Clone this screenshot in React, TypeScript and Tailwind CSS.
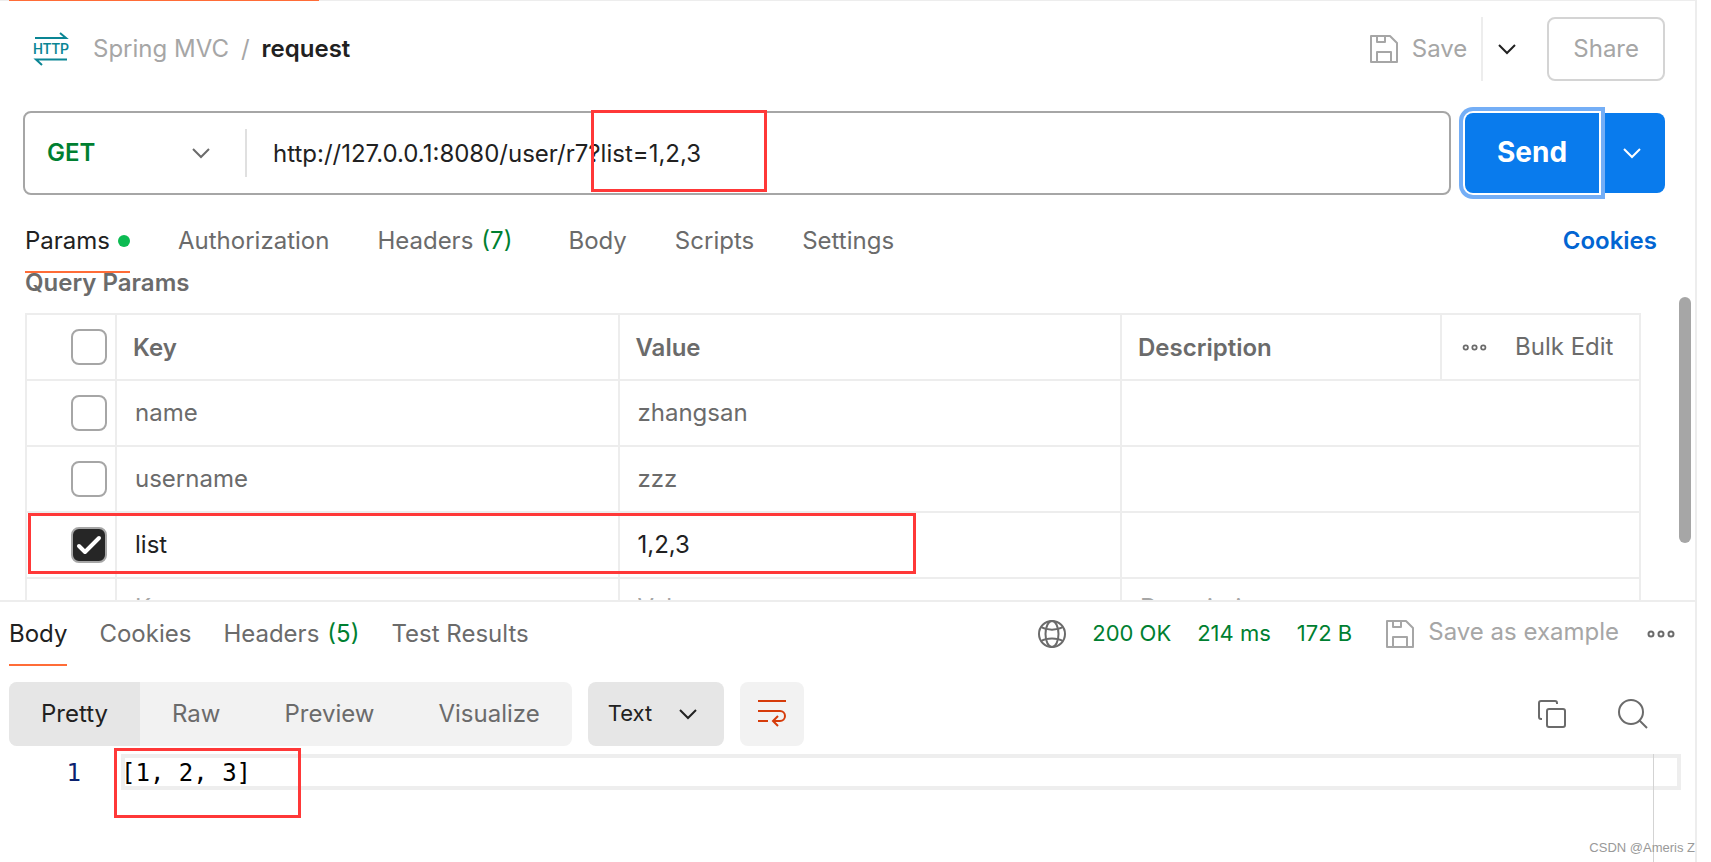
import { useState } from 'react';
import clsx from 'clsx';

const initialRows = [
  { key: 'name', value: 'zhangsan', enabled: false },
  { key: 'username', value: 'zzz', enabled: false },
  { key: 'list', value: '1,2,3', enabled: true },
];

const requestTabs = [
  { label: 'Params', dot: true },
  { label: 'Authorization' },
  { label: 'Headers', count: 7, className: 'pr-2' },
  { label: 'Body' },
  { label: 'Scripts' },
  { label: 'Settings' },
];

const responseTabs = [
  { label: 'Body' },
  { label: 'Cookies' },
  { label: 'Headers', count: 5 },
  { label: 'Test Results' },
];

const viewModes = ['Pretty', 'Raw', 'Preview', 'Visualize'];

function Chevron({ className }: { className?: string }) {
  return (
    <svg className={clsx('h-3 w-5', className)} viewBox="0 0 20 12" fill="none" stroke="currentColor" strokeWidth="2">
      <path d="M2 2l8 8 8-8" />
    </svg>
  );
}

function HttpIcon() {
  return (
    <svg className="h-8 w-8 overflow-visible text-[#0a8594]" viewBox="0 0 32 32" fill="none" stroke="currentColor" strokeWidth="2">
      <path d="M0 5h31L25 0M32 26.500H1L7 32" />
      <text
        x="16"
        y="21"
        textAnchor="middle"
        fill="currentColor"
        stroke="none"
        className="font-['Roboto',sans-serif] text-[14px] font-medium"
      >
        HTTP
      </text>
    </svg>
  );
}

function SaveIcon() {
  return (
    <svg className="h-7 w-7" viewBox="0 0 28 28" fill="none" stroke="currentColor" strokeWidth="2" strokeLinejoin="round">
      <path d="M1 1h19l7 7v19H1zM7 1v6h8V1M7 27V17h14v10" />
    </svg>
  );
}

function GlobeIcon() {
  return (
    <svg className="h-7 w-7 text-[#6b6b6b]" viewBox="0 0 28 28" fill="none" stroke="currentColor" strokeWidth="2">
      <circle cx="14" cy="14" r="13" />
      <ellipse cx="14" cy="14" rx="6.500" ry="13" />
      <path d="M3 7c6 3.500 16 3.500 22 0M3 21c6-3.500 16-3.500 22 0" />
    </svg>
  );
}

function WrapIcon() {
  return (
    <svg className="h-7 w-7 text-[#d63c0b]" viewBox="0 0 28 28" fill="none" stroke="currentColor" strokeWidth="2">
      <path d="M0 1h28M0 11h22a5 5 0 0 1 0 10h-7M0 21h10M20 16l-5 5 5 5" />
    </svg>
  );
}

function CopyIcon() {
  return (
    <svg className="h-7 w-7" viewBox="0 0 28 28" fill="none" stroke="currentColor" strokeWidth="2">
      <path d="M4 19H3a2 2 0 0 1-2-2V3a2 2 0 0 1 2-2h14a2 2 0 0 1 2 2v1" />
      <rect x="9" y="9" width="18" height="18" rx="2" />
    </svg>
  );
}

function SearchIcon() {
  return (
    <svg className="h-[30px] w-[30px]" viewBox="0 0 30 30" fill="none" stroke="currentColor" strokeWidth="2">
      <circle cx="13" cy="13" r="12" />
      <path d="M21.500 21.500l7.500 7.500" />
    </svg>
  );
}

function Dots({ className }: { className?: string }) {
  return (
    <svg className={className} viewBox="0 0 28 8" fill="none" stroke="currentColor" strokeWidth="2">
      <circle cx="4" cy="4" r="2.500" />
      <circle cx="14" cy="4" r="2.500" />
      <circle cx="24" cy="4" r="2.500" />
    </svg>
  );
}

function Checkbox({ label, checked, onChange }: { label: string; checked: boolean; onChange: () => void }) {
  return (
    <label className="relative ml-11 block h-9 w-9">
      <input
        type="checkbox"
        aria-label={label}
        checked={checked}
        onChange={onChange}
        className="peer block h-9 w-9 appearance-none rounded-lg border-2 border-[#a6a6a6] bg-white checked:bg-[#262626]"
      />
      <svg
        className="pointer-events-none absolute inset-0 hidden h-9 w-9 text-white peer-checked:block"
        viewBox="0 0 36 36"
        fill="none"
        stroke="currentColor"
        strokeWidth="4"
        strokeLinecap="round"
        strokeLinejoin="round"
      >
        <path d="M8 19l6 6 14-14" />
      </svg>
    </label>
  );
}

function Tab({ label, count, dot, active, className, onClick }: {
  label: string;
  count?: number;
  dot?: boolean;
  active: boolean;
  className?: string;
  onClick: () => void;
}) {
  return (
    <button
      onClick={onClick}
      className={clsx(
        'flex h-16 items-center gap-2 border-b-2 pt-0.5 whitespace-nowrap',
        active ? 'border-[#ff6c37] text-[#212121]' : 'border-transparent text-[#6b6b6b]',
        className
      )}
    >
      {label}
      {count && <span className="text-[#007f31]">({count})</span>}
      {dot && <span className="h-3 w-3 rounded-full bg-[#0cbb52]" />}
    </button>
  );
}

export default function App() {
  const [requestTab, setRequestTab] = useState('Params');
  const [responseTab, setResponseTab] = useState('Body');
  const [mode, setMode] = useState('Pretty');
  const [url, setUrl] = useState('http://127.0.0.1:8080/user/r7?list=1,2,3');
  const [rows, setRows] = useState(initialRows);

  const toggleRow = (index: number) =>
    setRows(rows.map((row, i) => (i === index ? { ...row, enabled: !row.enabled } : row)));

  return (
    <div className="relative min-h-screen bg-white pr-[14px] font-['Inter','Liberation_Sans',sans-serif] text-2xl text-[#6b6b6b] [font-optical-sizing:none]">
      <main className="flex min-h-screen flex-col border-r-2 border-[#ededed]">
        <div className="h-px bg-[#ededed] pl-[9px]">
          <div className="h-px w-[310px] bg-[#ff6c37]" />
        </div>

        <header className="flex h-20 items-center pt-4 pr-[30px] pl-[35px]">
          <HttpIcon />
          <nav className="ml-[26px] flex gap-3 text-[#a6a6a6]">
            <a href="#spring-mvc">Spring MVC</a>
            <span>/</span>
            <h1 className="font-semibold text-[#212121]">request</h1>
          </nav>
          <div className="ml-auto flex h-16 items-center">
            <button className="flex items-center gap-[14px] pr-[14px] text-[#a6a6a6]">
              <SaveIcon />
              Save
            </button>
            <button aria-label="Save options" className="flex h-16 items-center border-l-2 border-[#ededed] px-[14px] text-[#212121]">
              <Chevron />
            </button>
            <button className="ml-4 h-16 rounded-lg border-2 border-[#d4d4d4] px-6 text-[#a6a6a6]">Share</button>
          </div>
        </header>

        <div className="mt-[30px] flex items-center pr-[30px] pl-[23px]">
          <div className="relative flex h-[84px] flex-1 items-center rounded-lg border-2 border-[#a6a6a6]">
            <div className="relative">
              <select aria-label="Method" className="h-12 w-[220px] appearance-none pl-[22px] font-semibold text-[#007f31]">
                <option>GET</option>
                <option>POST</option>
              </select>
              <Chevron className="pointer-events-none absolute top-[18px] right-[34px]" />
            </div>
            <input
              aria-label="Request URL"
              value={url}
              onChange={(e) => setUrl(e.target.value)}
              className="h-12 flex-1 border-l-2 border-[#e0e0e0] pl-[26px] text-[#212121] outline-none"
            />
            <div className="pointer-events-none absolute -top-[3px] left-[566px] h-[82px] w-44 border-3 border-[#ff3838]" />
          </div>
          <button className="z-10 ml-[14px] h-20 w-[134px] rounded-l-lg bg-[#097bed] text-[28px] font-bold text-white shadow-[0_0_0_2px_#ffffff,0_0_0_6px_#74aef6]">
            Send
          </button>
          <button aria-label="Send options" className="flex h-20 w-[66px] items-center justify-center rounded-r-lg bg-[#097bed] text-white">
            <Chevron />
          </button>
        </div>

        <div className="mt-[14px] flex items-center pr-[38px] pl-[25px]">
          <div className="flex gap-12">
            {requestTabs.map((tab) => (
              <Tab key={tab.label} {...tab} active={requestTab === tab.label} onClick={() => setRequestTab(tab.label)} />
            ))}
          </div>
          <a href="#cookies" className="ml-auto font-semibold text-[#0265d2]">Cookies</a>
        </div>

        <section className="relative flex h-[327px] overflow-hidden pr-1 pl-[25px]">
          <div className="flex-1">
            <h2 className="-mt-1 leading-7 font-semibold">Query Params</h2>
            <table className="mt-4 w-full table-fixed border-collapse text-left [&_td]:border-2 [&_td]:border-[#ededed] [&_th]:border-2 [&_th]:border-[#ededed]">
              <colgroup>
                <col className="w-[90px]" />
                <col />
                <col />
                <col className="w-[320px]" />
                <col className="w-[199px]" />
              </colgroup>
              <thead>
                <tr className="h-[66px]">
                  <th>
                    <Checkbox
                      label="Select all"
                      checked={rows.every((row) => row.enabled)}
                      onChange={() => setRows(rows.map((row) => ({ ...row, enabled: true })))}
                    />
                  </th>
                  <th className="pt-0.5 pl-4 font-semibold">Key</th>
                  <th className="pt-0.5 pl-4 font-semibold">Value</th>
                  <th className="pt-0.5 pl-4 font-semibold">Description</th>
                  <th className="font-normal">
                    <div className="flex items-center gap-7 pl-5">
                      <button aria-label="Column options">
                        <Dots className="h-[7px] w-[25px]" />
                      </button>
                      <button>Bulk Edit</button>
                    </div>
                  </th>
                </tr>
              </thead>
              <tbody>
                {rows.map((row, i) => (
                  <tr key={row.key} className={clsx('h-[66px]', row.enabled && 'text-[#212121]')}>
                    <td>
                      <Checkbox label={`Enable ${row.key}`} checked={row.enabled} onChange={() => toggleRow(i)} />
                    </td>
                    <td>
                      <input aria-label="Key" defaultValue={row.key} className="block w-full pl-[18px]" />
                    </td>
                    <td>
                      <input aria-label="Value" defaultValue={row.value} className="block w-full pl-[18px]" />
                    </td>
                    <td colSpan={2}>
                      <input aria-label="Description" className="block w-full pl-[18px]" />
                    </td>
                  </tr>
                ))}
                <tr className="h-[60px]">
                  <td />
                  <td>
                    <input aria-label="New key" placeholder="Key" className="block w-full pl-[18px] placeholder:text-[#a6a6a6]" />
                  </td>
                  <td>
                    <input aria-label="New value" placeholder="Value" className="block w-full pl-[18px] placeholder:text-[#a6a6a6]" />
                  </td>
                  <td colSpan={2}>
                    <input aria-label="New description" placeholder="Description" className="block w-full pl-[18px] placeholder:text-[#a6a6a6]" />
                  </td>
                </tr>
              </tbody>
            </table>
          </div>
          <div className="mt-6 ml-[38px] h-[246px] w-3 rounded-full bg-[#a6a6a6]" />
          <div className="pointer-events-none absolute top-[240px] left-7 h-[61px] w-[888px] border-3 border-[#ff3838]" />
        </section>

        <section className="flex flex-1 flex-col border-t-2 border-[#ededed] pl-[9px]">
          <div className="flex items-center pr-5">
            <div className="flex gap-8">
              {responseTabs.map((tab) => (
                <Tab key={tab.label} {...tab} active={responseTab === tab.label} onClick={() => setResponseTab(tab.label)} />
              ))}
            </div>
            <div className="ml-auto flex items-center gap-[26px] text-[22px] text-[#007f31]">
              <GlobeIcon />
              <span>200 OK</span>
              <span>214 ms</span>
              <span>172 B</span>
            </div>
            <button className="ml-[34px] flex items-center gap-[14px] text-[#a6a6a6]">
              <SaveIcon />
              <span className="pb-1">Save as example</span>
            </button>
            <button aria-label="More actions" className="ml-7">
              <Dots className="h-2 w-7" />
            </button>
          </div>

          <div className="mt-4 flex h-16 items-center gap-4 pr-[47px]">
            <div className="flex h-16 overflow-hidden rounded-lg bg-[#f2f2f2]">
              {viewModes.map((name) => (
                <button
                  key={name}
                  onClick={() => setMode(name)}
                  className={clsx('px-8', mode === name && 'bg-[#e6e6e6] text-[#212121]')}
                >
                  {name}
                </button>
              ))}
            </div>
            <div className="relative text-[#212121]">
              <select aria-label="Response format" className="h-16 w-[136px] appearance-none rounded-lg bg-[#e6e6e6] pl-5 text-[22px]">
                <option>Text</option>
                <option>JSON</option>
              </select>
              <Chevron className="pointer-events-none absolute top-[26px] right-[26px]" />
            </div>
            <button aria-label="Wrap lines" className="flex h-16 w-16 items-center justify-center rounded-lg bg-[#f2f2f2]">
              <WrapIcon />
            </button>
            <button aria-label="Copy response" className="ml-auto">
              <CopyIcon />
            </button>
            <button aria-label="Search response" className="ml-9">
              <SearchIcon />
            </button>
          </div>

          <div className="relative mt-2 flex-1 pr-[14px] font-['DejaVu_Sans_Mono','Liberation_Mono',monospace]">
            <div className="flex h-9 items-center">
              <span className="w-[112px] pt-0.5 pr-10 text-right text-[#0b216f]">1</span>
              <code className="flex h-9 flex-1 items-center pt-0.5 font-[inherit] whitespace-pre text-black inset-ring-4 inset-ring-[#eeeeee]">[1, 2, 3]</code>
            </div>
            <div className="absolute top-0 right-[14px] bottom-0 w-7 border-l border-[#d3d3d3]" />
            <div className="pointer-events-none absolute -top-[6px] left-[105px] h-[70px] w-[187px] border-3 border-[#ff3838]" />
          </div>
        </section>
      </main>
      <span className="absolute right-4 bottom-1.5 font-['Liberation_Sans',sans-serif] text-[13px] text-[#999999]">CSDN @Ameris Z</span>
    </div>
  );
}
